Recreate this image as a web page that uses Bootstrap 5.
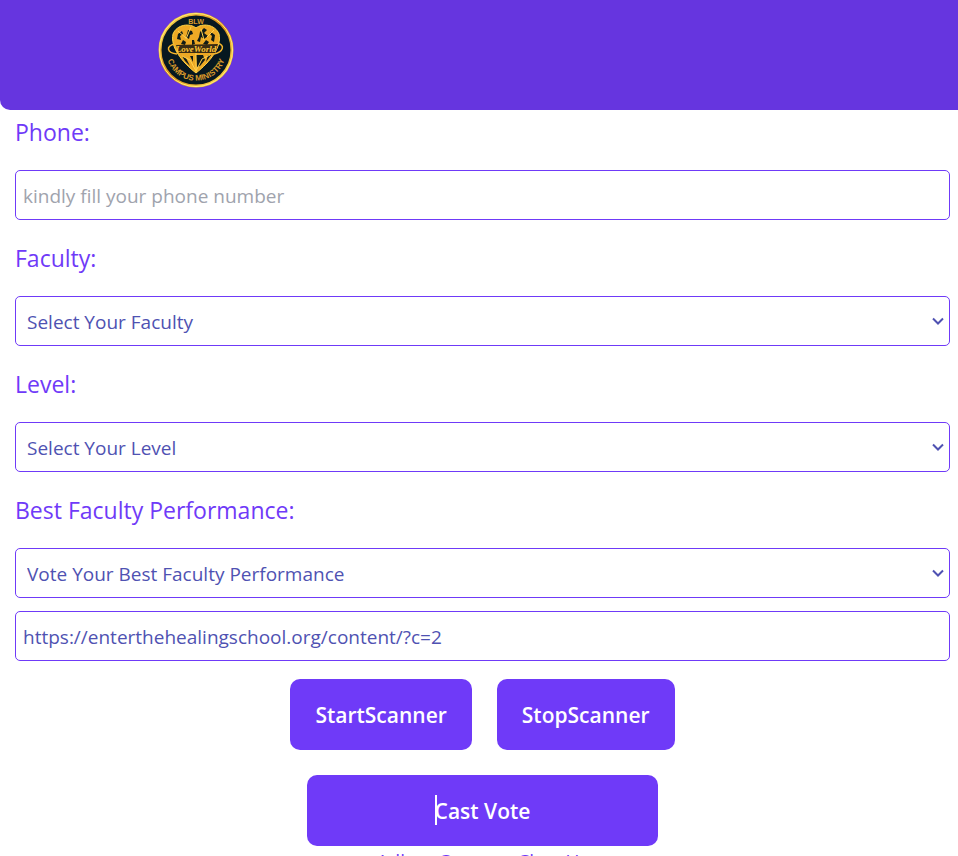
<!DOCTYPE html>
<html lang="en">
<head>
<meta charset="utf-8">
<meta name="viewport" content="width=device-width, initial-scale=1">
<title>Cast Vote</title>
<link href="https://cdn.jsdelivr.net/npm/bootstrap@5.3.0/dist/css/bootstrap.min.css" rel="stylesheet">
<style>
body { font-family: "Open Sans", "Noto Sans", sans-serif; color: #6f3af8; overflow-x: hidden; }
.site-header { background: #6635df; min-height: 110px; border-bottom-left-radius: 10px; padding: 12px 16.5%; }
.vote-form { padding: 4px 8px 0 15px; }
.field-group { margin-bottom: 20px; }
.field-title { font-size: 23px; line-height: 36px; margin-bottom: 20px; display: block; }
.field-box { font-size: 19px; height: 50px; border: 1px solid #6f3af8; border-radius: 5px; color: #4f52b2; background-color: #fff; }
.field-box.form-control { padding: 6px 7px 4px; }
.field-box.form-select { padding: 6px 32px 4px 11px; background-position: right 4px center; background-size: 14px 14px;
  background-image: url("data:image/svg+xml,%3Csvg xmlns='http://www.w3.org/2000/svg' viewBox='0 0 14 14'%3E%3Cpath d='M2 4.5l5 5 5-5' fill='none' stroke='%234f52b2' stroke-width='2'/%3E%3C/svg%3E"); }
.field-box::placeholder { color: #a0a3ad; }
.link-box { margin-top: 13px; }
.scan-row { gap: 25px; margin-top: 18px; margin-bottom: 25px; }
.vote-btn, .vote-btn:hover { background: #6f3af8; color: #fff; font-size: 21px; font-weight: 600; line-height: 33px; padding: 20px 25px 18px; border: 0; border-radius: 10px; }
.cast-btn { width: 351px; max-width: 100%; }
.text-caret { left: 0; bottom: 0; width: 2px; height: 30px; background: #fff; }
.foot-note { font-size: 19px; line-height: 26px; margin-top: 2px; }
</style>
</head>
<body>
<header class="site-header">
  <svg class="d-block" width="76" height="76" viewBox="0 0 76 76" role="img" aria-label="BLW Campus Ministry">
    <defs>
      <linearGradient id="gold" x1="0" y1="0" x2="1" y2="1"><stop offset="0" stop-color="#ffdf55"/><stop offset=".5" stop-color="#d98916"/><stop offset="1" stop-color="#ffe04e"/></linearGradient>
      <path id="lowerArc" d="M9 31A30 30 0 1 0 67 31"/>
    </defs>
    <circle cx="38" cy="38" r="36" fill="#071820" stroke="url(#gold)" stroke-width="3"/>
    <circle cx="38" cy="38" r="36.500" fill="none" stroke="#ffec78" stroke-width="1"/>
    <path d="M38 16C32 11 19 12 15 22c-3 13 9 28 23 39 14-11 26-26 23-39C57 12 44 11 38 16Z" fill="#eda925" stroke="#ffd443" stroke-width="1"/>
    <path d="M20 22l4-3 1 3-3 2 1 4-4-1zM30 18l4 1 1 3-3 1-1 4-3-2 1-3zM25 28l3 2-1 3-4-1zM42 20l4-4 3 2-3 3 4 3-4 3-3-2-1 5-3-1 2-4zM53 20l4 3-1 7-3-2 1-4-2-2zM48 28l3 2-2 3-4-1zM34 28l2 0 1 4-3 1zM24 44l4 2 4 8-5-5zM32 44h3v6zM38 43h7l2 5-5 6-3 1zM50 43l3 0-5 7z" fill="#101b18"/>
    <path d="M24 44l8 4 6 11 6-12 8-4M38 40v20M20 19l8 7M33 15l-5 12M43 17l3 11M56 18l-7 7" fill="none" stroke="#ffd350" stroke-width="1"/>
    <path d="M18 33l42-1-3 9H21z" fill="#3a2c14"/>
    <path d="M17 32C7 34 9 41 19 42M59 31c9 2 6 9-3 11" fill="none" stroke="#f5b52b" stroke-width="1.500"/>
    <text x="38" y="40" text-anchor="middle" font-family="Liberation Serif, serif" font-size="9" font-weight="700" font-style="italic" fill="#ffc638">LoveWorld</text>
    <text x="38" y="12" text-anchor="middle" font-family="Liberation Sans, sans-serif" font-size="7" font-weight="700" fill="#d99a2b">BLW</text>
    <text font-family="Liberation Sans, sans-serif" font-size="8" font-weight="700" fill="#d99a2b" text-anchor="middle"><textPath href="#lowerArc" startOffset="50%">CAMPUS MINISTRY</textPath></text>
  </svg>
</header>
<main>
<form class="vote-form">
  <div class="field-group"><label class="field-title" for="phone">Phone:</label><input class="form-control field-box" id="phone" type="tel" placeholder="kindly fill your phone number"></div>
  <div class="field-group"><label class="field-title" for="faculty">Faculty:</label><select class="form-select field-box" id="faculty"><option>Select Your Faculty</option></select></div>
  <div class="field-group"><label class="field-title" for="level">Level:</label><select class="form-select field-box" id="level"><option>Select Your Level</option></select></div>
  <div><label class="field-title" for="best">Best Faculty Performance:</label><select class="form-select field-box" id="best"><option>Vote Your Best Faculty Performance</option></select></div>
  <input class="form-control field-box link-box" type="text" aria-label="Scanned link" value="https://enterthehealingschool.org/content/?c=2">
  <div class="d-flex flex-wrap justify-content-center scan-row">
    <button class="btn vote-btn" type="button">StartScanner</button>
    <button class="btn vote-btn" type="button">StopScanner</button>
  </div>
  <div class="text-center">
    <button class="btn vote-btn cast-btn" type="submit"><span class="position-relative"><span class="text-caret position-absolute"></span>Cast Vote</span></button>
    <p class="foot-note mb-0">Adlam Concern Chas Us</p>
  </div>
</form>
</main>
<script src="https://cdn.jsdelivr.net/npm/bootstrap@5.3.0/dist/js/bootstrap.bundle.min.js"></script>
</body>
</html>
